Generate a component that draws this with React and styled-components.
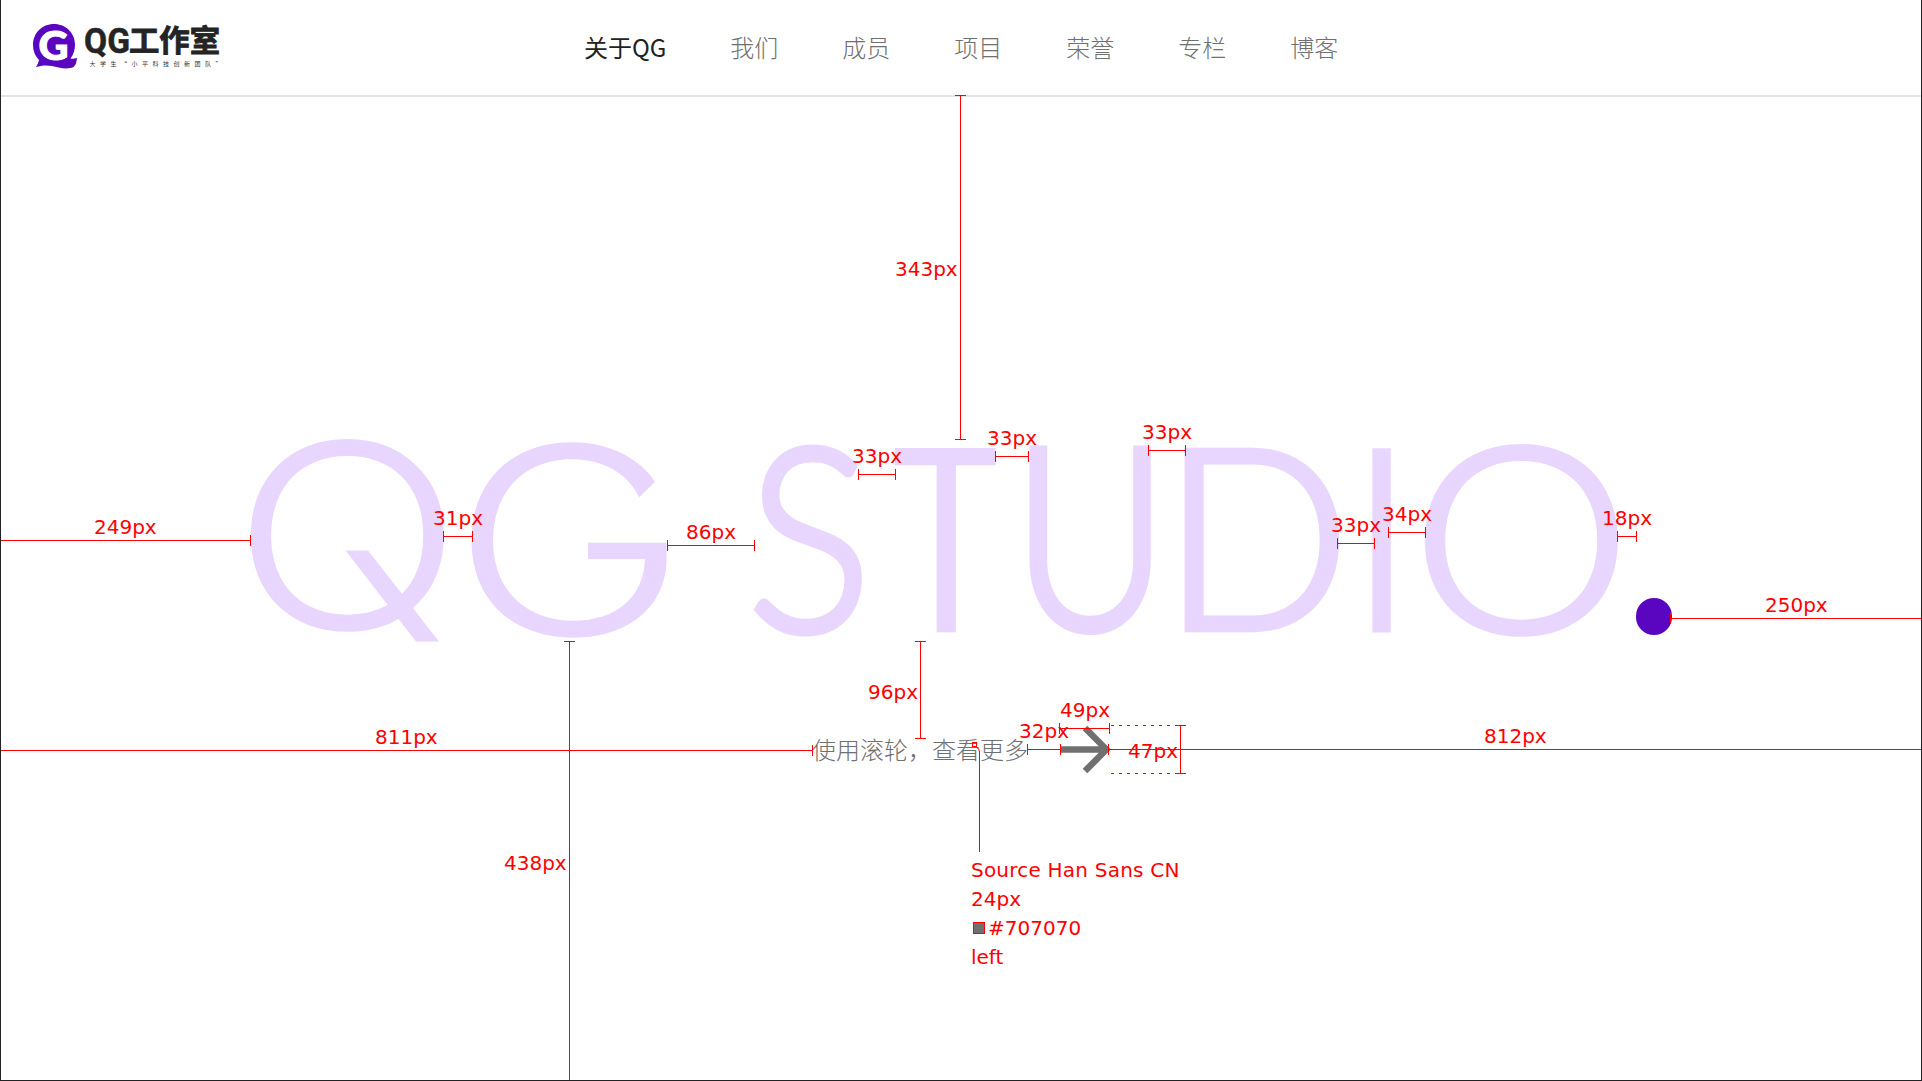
import React from 'react';
import styled, { createGlobalStyle } from 'styled-components';

const GlobalStyle = createGlobalStyle`
  *, *::before, *::after { box-sizing: border-box; }
  body { margin: 0; background: #fff; overflow: hidden; }
`;

const hanSans = '"Noto Sans CJK SC", sans-serif';
const accent = '#5a06c0';
const lilac = '#e8d6ff';
const note = '#ff0000';

const Page = styled.div`
  position: relative;
  width: 1922px;
  height: 1081px;
  overflow: hidden;
  background: #fff;
  border: 1px solid #222126;
  border-top: 0;
  font-family: ${hanSans};
`;

const Header = styled.header`
  display: flex;
  align-items: flex-start;
  height: 97px;
  padding-left: 32px;
  border-bottom: 2px solid #e4e4e4;
`;

const LogoSvg = styled.svg`
  display: block;
  flex: none;
  width: 190px;
  height: 95px;
  overflow: visible;
`;

const Nav = styled.nav`
  display: flex;
  align-items: center;
  gap: 64px;
  height: 93px;
  margin-left: 361px;
`;

const NavLink = styled.a`
  font-size: 24px;
  line-height: 36px;
  white-space: nowrap;
  font-weight: ${(p) => (p.$active ? 400 : 300)};
  color: ${(p) => (p.$active ? '#222' : '#707070')};
`;

const Hero = styled.main`
  padding-top: 341px;
`;

const Wordmark = styled.h1`
  display: flex;
  margin: 0;
  padding-left: 249px;
  height: 204px;
`;

const LetterSvg = styled.svg`
  display: block;
  flex: none;
  height: 204px;
  margin-left: ${(p) => p.$gap}px;
  overflow: visible;
`;

const LetterText = styled.text`
  font-family: ${(p) => p.$face}, sans-serif;
  font-weight: 300;
  font-size: 260px;
  fill: ${lilac};
  stroke: ${lilac};
  stroke-width: ${(p) => p.$pen}px;
  stroke-linejoin: miter;
`;

const Dot = styled.span`
  flex: none;
  width: 36.5px;
  height: 36.5px;
  margin: 160px 0 0 18px;
  border-radius: 50%;
  background: ${accent};
`;

const Prompt = styled.div`
  display: flex;
  align-items: center;
  gap: 32px;
  height: 48px;
  margin-top: 83px;
  padding-left: 811px;
  font-size: 24px;
  line-height: 36px;
  font-weight: 300;
  color: #707070;
`;

const ArrowSvg = styled.svg`
  display: block;
  flex: none;
  width: 50px;
  height: 48px;
`;

const Overlay = styled.div`
  position: absolute;
  inset: 0 auto auto -1px;
  width: 1922px;
  height: 1081px;
  color: ${note};
  font: 20px/20px "DejaVu Sans", Verdana, sans-serif;
`;

const HLine = styled.div`
  position: absolute;
  left: ${(p) => p.$x}px;
  top: ${(p) => p.$y - 5}px;
  width: ${(p) => p.$len}px;
  height: 11px;
  border: solid ${note};
  border-width: 0 1px;
  background: linear-gradient(${note}, ${note}) 0 5px / 100% 1px no-repeat;
`;

const VLine = styled.div`
  position: absolute;
  left: ${(p) => p.$x - 5}px;
  top: ${(p) => p.$y}px;
  width: 11px;
  height: ${(p) => p.$len}px;
  border: solid ${note};
  border-width: 1px 0;
  background: linear-gradient(${note}, ${note}) 5px 0 / 1px 100% no-repeat;
`;

const DashLine = styled.div`
  position: absolute;
  left: 1111px;
  top: ${(p) => p.$y}px;
  width: 64px;
  height: 1px;
  background: repeating-linear-gradient(90deg, ${note} 0 3px, transparent 3px 8px);
`;

const Label = styled.span`
  position: absolute;
  left: ${(p) => p.$x}px;
  top: ${(p) => p.$base - 17}px;
  white-space: nowrap;
`;

const LeaderSvg = styled.svg`
  position: absolute;
  left: 970px;
  top: 740px;
  width: 12px;
  height: 112px;
`;

const Spec = styled.div`
  position: absolute;
  left: 971px;
  top: 856px;
  display: flex;
  flex-direction: column;
  line-height: 29px;
  white-space: nowrap;
`;

const SpecRow = styled.div`
  display: flex;
  align-items: center;
  gap: 3px;
  letter-spacing: ${(p) => (p.$wide ? 0.22 : 0)}px;
`;

const Swatch = styled.i`
  width: 12px;
  height: 12px;
  margin: -2px 0 0 2px;
  border: 1px solid ${note};
  background: #707070;
`;

// ink: [left, right, ascent, descent] of the letter at 260px
const letters = [
  { ch: 'Q', gap: 0, w: 193.5, y: 0.5, h: 193.5, pen: 5.5, ink: [14.4, 190.3, 186.6, 2.2] },
  { ch: 'G', gap: 28.5, w: 195.5, y: 5.5, h: 193.5, pen: 0, ink: [17, 176.2, 190.5, 1.8], face: 'Inter' },
  { ch: 'S', gap: 86.5, w: 108, y: 5.5, h: 193.5, pen: 7, ink: [11, 125, 187, 2.5] },
  { ch: 'T', gap: 33, w: 144.9, x: -22.2, y: 10, h: 184.5, pen: 6.5, ink: [2.8, 146, 184.1, 0], box: 100.5 },
  { ch: 'U', gap: 33, w: 121.5, y: 7.5, h: 189.5, pen: 8, ink: [24, 163.8, 184.1, 2.2] },
  { ch: 'D', gap: 34, w: 154.5, y: 10, h: 184.5, pen: 6.5, ink: [26.4, 181.4, 184.1, 0] },
  { ch: 'I', gap: 33.5, w: 18.5, y: 10, h: 184.5, pen: 5, ink: [26.8, 40.3, 184.1, 0] },
  { ch: 'O', gap: 33.5, w: 193.5, y: 5.5, h: 193.5, pen: 5.5, ink: [14.4, 190.3, 186.6, 2.2] },
];

const trims = {
  Q: <ellipse cx="96.750" cy="97.250" rx="99" ry="98" />,
  G: <polygon points="-5,-5 220,-5 220,8 150,76 100,76 100,140 116,140 116,104 240,104 240,204 -5,204" />,
  T: <rect width="100.500" height="204" />,
};

function Letter({ ch, gap, w, x = 0, y, h, box, pen, ink, face = 'Lato' }) {
  const [left, right, ascent, descent] = ink;
  const sx = w / (right - left + pen);
  const sy = h / (ascent + descent + pen);
  const tx = x - (left - pen / 2) * sx;
  const ty = y + (ascent + pen / 2) * sy;
  return (
    <LetterSvg $gap={gap} width={box || w}>
      {trims[ch] && <clipPath id={`trim-${ch}`}>{trims[ch]}</clipPath>}
      <g clipPath={trims[ch] ? `url(#trim-${ch})` : undefined}>
        <LetterText $face={face} $pen={pen} transform={`matrix(${sx} 0 0 ${sy} ${tx} ${ty})`}>
          {ch}
        </LetterText>
      </g>
      {ch === 'Q' && <path d="M95.500 112.500h22.500L189 203.500h-23z" fill={lilac} />}
    </LetterSvg>
  );
}

function Logo() {
  return (
    <LogoSvg viewBox="33 0 190 95">
      <path
        fill={accent}
        d="M54 24C65.800 24 75 33 75 44.500C75 50 73.500 54.500 70.500 58.500C73 59 75 58.500 77 57.800C76.500 62 76 65 73.500 67C67 70 58 67.500 52 66C46 64.800 41 65.500 36 67C37.500 64.500 38.500 62.500 39 60C35 56 33 51 33 45C33 33 42 24 54 24Z"
      />
      <text
        x="38.500"
        y="60"
        fill="#fff"
        stroke="#fff"
        strokeWidth="1"
        fontFamily="Lato, sans-serif"
        fontWeight="900"
        fontSize="39"
        textLength="30"
        lengthAdjust="spacingAndGlyphs"
      >
        G
      </text>
      <g fill="#242424" stroke="#242424">
        <text x="84" y="52.500" strokeWidth="0.500" fontFamily="Roboto, sans-serif" fontWeight="700" fontSize="35" textLength="46" lengthAdjust="spacingAndGlyphs">
          QG
        </text>
        <text x="129" y="50.500" strokeWidth="0.900" fontFamily={hanSans} fontWeight="700" fontSize="30" textLength="91" lengthAdjust="spacingAndGlyphs">
          工作室
        </text>
      </g>
      <text x="89.500" y="66" fill="#333" fontFamily={hanSans} fontSize="6" letterSpacing="4.500">
        大学生“小平科技创新团队”
      </text>
    </LogoSvg>
  );
}

const navItems = ['关于QG', '我们', '成员', '项目', '荣誉', '专栏', '博客'];

const horizontals = [
  { x: 0, to: 250, y: 540, text: '249px', lx: 94, base: 534 },
  { x: 443, to: 472, y: 536, text: '31px', lx: 433, base: 525 },
  { x: 667, to: 754, y: 545, text: '86px', lx: 686, base: 539 },
  { x: 858, to: 895, y: 474, text: '33px', lx: 852, base: 463 },
  { x: 995, to: 1028, y: 456, text: '33px', lx: 987, base: 445 },
  { x: 1148, to: 1185, y: 450, text: '33px', lx: 1142, base: 439 },
  { x: 1337, to: 1374, y: 543, text: '33px', lx: 1331, base: 532 },
  { x: 1388, to: 1425, y: 532, text: '34px', lx: 1382, base: 521 },
  { x: 1617, to: 1636, y: 536, text: '18px', lx: 1602, base: 525 },
  { x: 1670, to: 1922, y: 618, text: '250px', lx: 1765, base: 612 },
  { x: 0, to: 812, y: 750, text: '811px', lx: 375, base: 744 },
  { x: 1108, to: 1922, y: 749, text: '812px', lx: 1484, base: 743 },
  { x: 1059, to: 1109, y: 728, text: '49px', lx: 1060, base: 717 },
  { x: 1027, to: 1060, y: 749, text: '32px', lx: 1019, base: 738 },
];

const verticals = [
  { x: 960, y: 95, to: 439, text: '343px', lx: 895, base: 276 },
  { x: 920, y: 641, to: 738, text: '96px', lx: 868, base: 699 },
  { x: 569, y: 641, to: 1081, text: '438px', lx: 504, base: 870 },
  { x: 1180, y: 725, to: 773, text: '47px', lx: 1128, base: 758 },
];

export default function App() {
  return (
    <>
      <GlobalStyle />
      <Page>
        <Header>
          <Logo />
          <Nav>
            {navItems.map((item, i) => (
              <NavLink key={item} $active={i === 0}>
                {item}
              </NavLink>
            ))}
          </Nav>
        </Header>
        <Hero>
          <Wordmark>
            {letters.map((l) => (
              <Letter key={l.ch} {...l} />
            ))}
            <Dot />
          </Wordmark>
          <Prompt>
            <span>使用滚轮，查看更多</span>
            <ArrowSvg viewBox="0 0 50 48" fill="none" stroke="#707070" strokeWidth="6.500">
              <path d="M0 24.500H46M25 3L46.500 24.500L25 46" />
            </ArrowSvg>
          </Prompt>
        </Hero>
        <Overlay>
          {horizontals.map((m) => (
            <React.Fragment key={`${m.x}-${m.y}`}>
              <HLine $x={m.x} $y={m.y} $len={m.to - m.x + 1} />
              <Label $x={m.lx} $base={m.base}>{m.text}</Label>
            </React.Fragment>
          ))}
          {verticals.map((m) => (
            <React.Fragment key={`${m.x}-${m.y}`}>
              <VLine $x={m.x} $y={m.y} $len={m.to - m.y + 1} />
              <Label $x={m.lx} $base={m.base}>{m.text}</Label>
            </React.Fragment>
          ))}
          <DashLine $y={725} />
          <DashLine $y={773} />
          <LeaderSvg viewBox="0 0 12 112" fill="none" stroke={note}>
            <rect x="2.500" y="2.500" width="4" height="4" />
            <path d="M6.500 7.500Q9.500 8 9.500 12V112" />
          </LeaderSvg>
          <Spec>
            <SpecRow $wide>Source Han Sans CN</SpecRow>
            <SpecRow>24px</SpecRow>
            <SpecRow>
              <Swatch />
              #707070
            </SpecRow>
            <SpecRow>left</SpecRow>
          </Spec>
        </Overlay>
      </Page>
    </>
  );
}
